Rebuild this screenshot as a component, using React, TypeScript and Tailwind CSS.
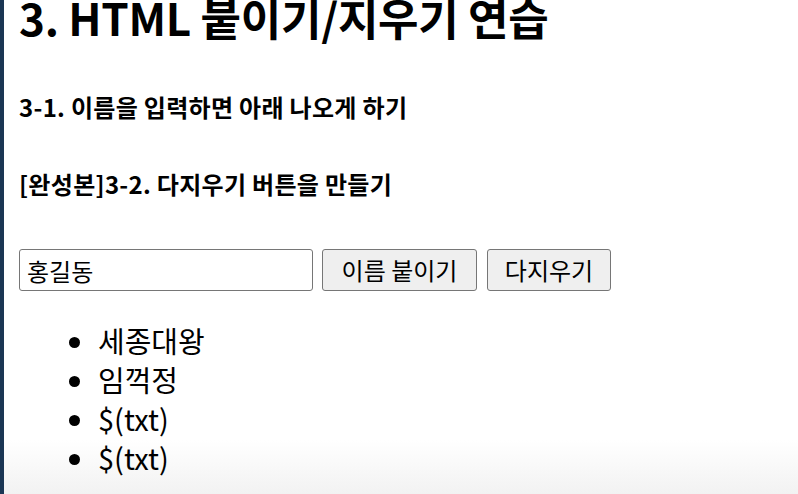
import { useState } from "react";

const initialNames = ["세종대왕", "임꺽정", "$(txt)", "$(txt)"];

export default function App() {
  const [name, setName] = useState("홍길동");
  const [names, setNames] = useState(initialNames);

  return (
    <div
      className="flex h-[494px] w-full overflow-hidden bg-[linear-gradient(to_bottom,#ffffff_440px,#f2f2f2)] text-black"
      style={{ fontFamily: '"Noto Sans CJK KR", "Noto Sans", sans-serif' }}
    >
      <div className="w-[4px] shrink-0 bg-[#1b3654]" />
      <div className="flex-1 pl-[15px]">
        <h1 className="-mt-[11px] text-[44px] leading-[56px] font-bold tracking-[-0.3px]">
          3. HTML 붙이기/지우기 연습
        </h1>
        <h4 className="mt-[48px] text-[24px] leading-[28px] font-bold tracking-[0.3px]">
          3-1. 이름을 입력하면 아래 나오게 하기
        </h4>
        <h4 className="mt-[49px] text-[24px] leading-[28px] font-bold tracking-[0.3px]">
          [완성본]3-2. 다지우기 버튼을 만들기
        </h4>
        <div className="mt-[51px] flex items-center gap-[8px]">
          <input
            value={name}
            onChange={(e) => setName(e.target.value)}
            className="h-[42px] w-[294px] rounded-[3px] border-[1.5px] border-[#767676] bg-white px-[7px] text-[24px] outline-none"
          />
          <button
            onClick={() => setNames([...names, name])}
            className="ml-[1px] h-[42px] w-[155px] rounded-[3px] border-[1.5px] border-[#767676] bg-[#efefef] text-[24px]"
          >
            이름 붙이기
          </button>
          <button
            onClick={() => setNames([])}
            className="ml-[2px] h-[42px] w-[124px] rounded-[3px] border-[1.5px] border-[#767676] bg-[#efefef] text-[24px]"
          >
            다지우기
          </button>
        </div>
        <ul className="mt-[30px] ml-[79px] list-disc text-[29px] leading-[39px]">
          {names.map((n, i) => (
            <li key={i}>{n}</li>
          ))}
        </ul>
      </div>
    </div>
  );
}
